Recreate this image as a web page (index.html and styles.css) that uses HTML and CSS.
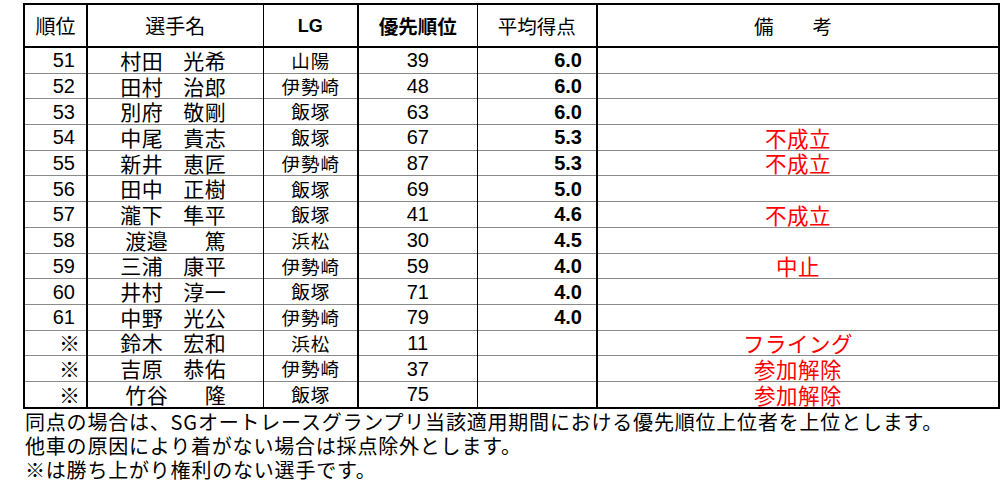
FILE: index.html
```html
<!DOCTYPE html>
<html lang="ja">
<head>
<meta charset="utf-8">
<title>優先順位</title>
<link rel="stylesheet" href="styles.css">
</head>
<body>
<div class="page">
<table class="rank">
<colgroup>
<col class="c-rank"><col class="c-name"><col class="c-lg"><col class="c-pri"><col class="c-avg"><col class="c-note">
</colgroup>
<thead>
<tr>
<th class="h-rank">順位</th>
<th class="h-name">選手名</th>
<th class="h-lg">LG</th>
<th class="h-pri">優先順位</th>
<th class="h-avg">平均得点</th>
<th class="h-note">備　　考</th>
</tr>
</thead>
<tbody>
<tr><td class="rk">51</td><td class="nm"><span class="nb"><span>村田</span><span>光希</span></span></td><td class="lg">山陽</td><td class="pr">39</td><td class="av">6.0</td><td class="nt"></td></tr>
<tr><td class="rk">52</td><td class="nm"><span class="nb"><span>田村</span><span>治郎</span></span></td><td class="lg">伊勢崎</td><td class="pr">48</td><td class="av">6.0</td><td class="nt"></td></tr>
<tr><td class="rk">53</td><td class="nm"><span class="nb"><span>別府</span><span>敬剛</span></span></td><td class="lg">飯塚</td><td class="pr">63</td><td class="av">6.0</td><td class="nt"></td></tr>
<tr><td class="rk">54</td><td class="nm"><span class="nb"><span>中尾</span><span>貴志</span></span></td><td class="lg">飯塚</td><td class="pr">67</td><td class="av">5.3</td><td class="nt">不成立</td></tr>
<tr><td class="rk">55</td><td class="nm"><span class="nb"><span>新井</span><span>恵匠</span></span></td><td class="lg">伊勢崎</td><td class="pr">87</td><td class="av">5.3</td><td class="nt">不成立</td></tr>
<tr><td class="rk">56</td><td class="nm"><span class="nb"><span>田中</span><span>正樹</span></span></td><td class="lg">飯塚</td><td class="pr">69</td><td class="av">5.0</td><td class="nt"></td></tr>
<tr><td class="rk">57</td><td class="nm"><span class="nb"><span>瀧下</span><span>隼平</span></span></td><td class="lg">飯塚</td><td class="pr">41</td><td class="av">4.6</td><td class="nt">不成立</td></tr>
<tr><td class="rk">58</td><td class="nm"><span class="nb"><span class="sh">渡邉</span><span>篤</span></span></td><td class="lg">浜松</td><td class="pr">30</td><td class="av">4.5</td><td class="nt"></td></tr>
<tr><td class="rk">59</td><td class="nm"><span class="nb"><span>三浦</span><span>康平</span></span></td><td class="lg">伊勢崎</td><td class="pr">59</td><td class="av">4.0</td><td class="nt">中止</td></tr>
<tr><td class="rk">60</td><td class="nm"><span class="nb"><span>井村</span><span>淳一</span></span></td><td class="lg">飯塚</td><td class="pr">71</td><td class="av">4.0</td><td class="nt"></td></tr>
<tr><td class="rk">61</td><td class="nm"><span class="nb"><span>中野</span><span>光公</span></span></td><td class="lg">伊勢崎</td><td class="pr">79</td><td class="av">4.0</td><td class="nt"></td></tr>
<tr><td class="rk sym">※</td><td class="nm"><span class="nb"><span>鈴木</span><span>宏和</span></span></td><td class="lg">浜松</td><td class="pr">11</td><td class="av"></td><td class="nt">フライング</td></tr>
<tr><td class="rk sym">※</td><td class="nm"><span class="nb"><span>吉原</span><span>恭佑</span></span></td><td class="lg">伊勢崎</td><td class="pr">37</td><td class="av"></td><td class="nt">参加解除</td></tr>
<tr><td class="rk sym">※</td><td class="nm"><span class="nb"><span class="sh">竹谷</span><span>隆</span></span></td><td class="lg">飯塚</td><td class="pr">75</td><td class="av"></td><td class="nt">参加解除</td></tr>
</tbody>
</table>
<div class="notes">
<p>同点の場合は、SGオートレースグランプリ当該適用期間における優先順位上位者を上位とします。</p>
<p>他車の原因により着がない場合は採点除外とします。</p>
<p>※は勝ち上がり権利のない選手です。</p>
</div>
</div>
</body>
</html>
```

FILE: styles.css
```css
html, body {
  margin: 0;
  padding: 0;
  background: #ffffff;
}
body {
  font-family: "Liberation Sans", "Noto Sans CJK JP", sans-serif;
  color: #000000;
}
.page {
  padding: 3px 0 0 23px;
}
.rank {
  border-collapse: collapse;
  table-layout: fixed;
  width: 975px;
  border: 2px solid #000;
}
.c-rank { width: 63px; }
.c-name { width: 176px; }
.c-lg { width: 95px; }
.c-pri { width: 119px; }
.c-avg { width: 120px; }
.c-note { width: 402px; }

.rank th {
  height: 41px;
  padding: 0;
  font-weight: normal;
  font-size: 20px;
  line-height: 1;
  text-align: center;
  vertical-align: middle;
  border-bottom: 2px solid #000;
  border-left: 1px solid #000;
  font-family: "Noto Sans CJK JP", sans-serif;
}
.rank th.h-lg {
  font-family: "Liberation Sans", sans-serif;
  font-weight: bold;
  font-size: 18px;
}
.rank th.h-pri { font-weight: bold; font-size: 19.5px; }
.rank th.h-avg { font-size: 19.5px; }
.rank th.h-note { font-size: 19.5px; padding-right: 10px; }

.rank td {
  height: 24.7px;
  padding: 0;
  line-height: 1;
  vertical-align: middle;
  border-top: 1px solid #8a8a8a;
  border-left: 1px solid #000;
  white-space: nowrap;
}
.rank tbody tr:first-child td { border-top: 2px solid #000; }

.rank .h-name, .rank .nm { border-left-width: 2px; }
.rank .h-lg, .rank .lg { border-left-width: 1px; }
.rank .h-pri, .rank .pr { border-left-width: 2px; }
.rank .h-avg, .rank .av { border-left-width: 1px; }
.rank .h-note, .rank .nt { border-left-width: 2px; }

.rk {
  text-align: right;
  padding-right: 11px !important;
  font-size: 20px;
}
.rk.sym {
  font-family: "Noto Sans CJK JP", sans-serif;
  font-size: 21px;
  padding-right: 6px !important;
}
.nm {
  text-align: center;
  font-family: "Noto Sans CJK JP", sans-serif;
  font-size: 21px;
}
.nb {
  display: inline-flex;
  justify-content: space-between;
  width: 106px;
  letter-spacing: 0.5px;
  margin-right: 4px;
}
.nb .sh { padding-left: 5px; }
.lg {
  text-align: center;
  font-family: "Noto Sans CJK JP", sans-serif;
  font-size: 18.5px;
  letter-spacing: 1px;
  text-indent: 1px;
}
.pr {
  text-align: center;
  font-size: 20px;
}
.av {
  text-align: right;
  padding-right: 14px !important;
  font-weight: bold;
  font-size: 20px;
}
.nt {
  text-align: center;
  color: #ff0000;
  font-family: "Noto Sans CJK JP", sans-serif;
  font-size: 21.5px;
  letter-spacing: 0.5px;
}
.notes {
  padding: 1px 0 0 2px;
  font-family: "Noto Sans CJK JP", sans-serif;
  font-size: 20px;
  line-height: 24px;
  letter-spacing: 0.8px;
}
.notes p {
  margin: 0;
}
```
